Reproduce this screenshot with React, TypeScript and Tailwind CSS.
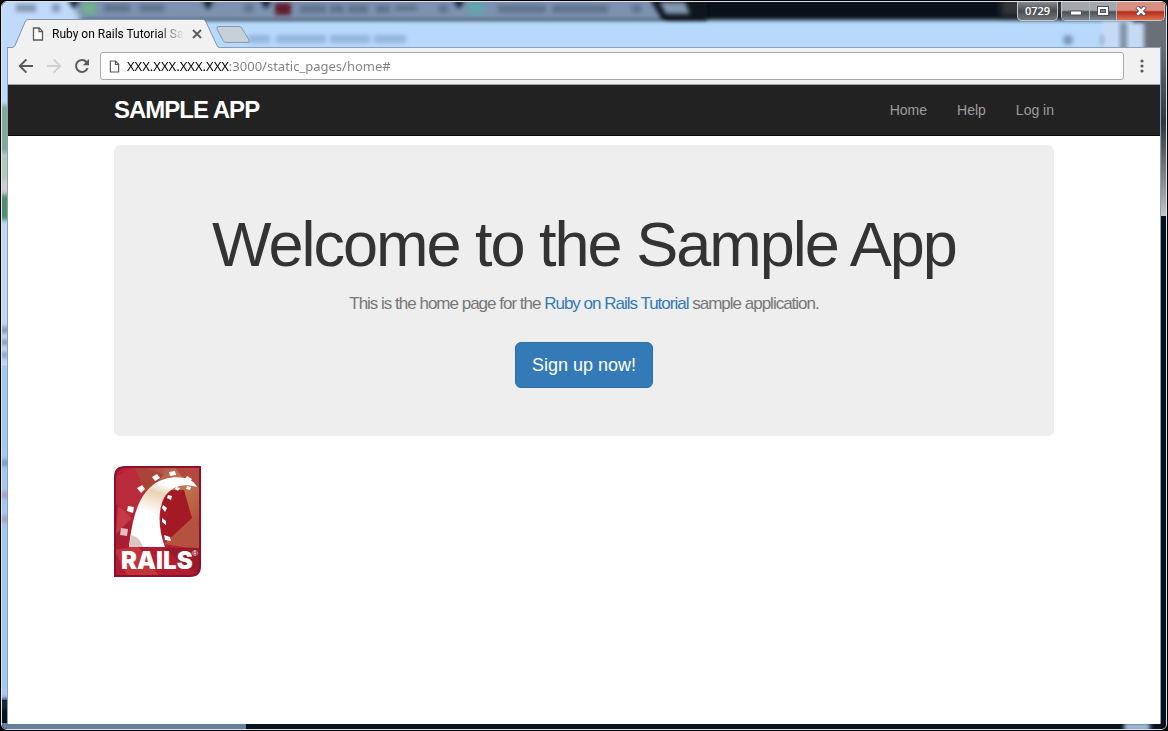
import React from "react";

type IconProps = {
  className?: string;
};

const PageIcon = ({ className }: IconProps) => (
  <svg
    viewBox="0 0 12 14"
    className={className}
    fill="none"
    stroke="#5a5a5a"
    strokeWidth="1.3"
  >
    <path d="M1.5 1h5.7l3.3 3.4V13h-9z" fill="#fcfcfc" />
    <path d="M7 1v3.6h3.5" />
  </svg>
);

const BackIcon = ({ className }: IconProps) => (
  <svg
    viewBox="0 0 16 16"
    className={className}
    fill="none"
    stroke="currentColor"
    strokeWidth="2"
  >
    <path d="M15 8H2M8.4 1.4L1.8 8l6.6 6.6" />
  </svg>
);

const ReloadIcon = () => (
  <svg viewBox="0 0 16 16" className="size-4" fill="none">
    <path
      d="M13.6 10.2A6 6 0 1 1 12.4 3.8L14 5.4"
      stroke="#5a5a5a"
      strokeWidth="2"
    />
    <path d="M15 1v6.2H8.8z" fill="#5a5a5a" />
  </svg>
);

// Blurred windows that shine through the glass frame
const Backdrop = () => (
  <svg className="absolute inset-0 size-full" aria-hidden="true">
    <defs>
      <filter id="soft" x="-20%" y="-50%" width="140%" height="200%">
        <feGaussianBlur stdDeviation="3" />
      </filter>
      <filter id="edge" x="-30%" y="-60%" width="160%" height="220%">
        <feGaussianBlur stdDeviation="2" />
      </filter>
      <linearGradient id="rightGlass" x1="0" y1="0" x2="0" y2="1">
        <stop offset="0" stopColor="#6a6e72" />
        <stop offset="0.45" stopColor="#33373b" />
        <stop offset="0.8" stopColor="#8b8b8b" />
        <stop offset="1" stopColor="#c4c4c4" />
      </linearGradient>
    </defs>
    <rect width="100%" height="100%" fill="#09121a" />
    <rect x="-10" y="18" width="98%" height="40" fill="#b7d9fc" filter="url(#edge)" />
    <rect x="-10" y="-10" width="670" height="28" fill="#7b92b0" filter="url(#edge)" />
    <path d="M-10 -10H66L80 22V60H-10z" fill="#c0dafa" filter="url(#soft)" />
    <path d="M645 -8h60v26H668q-9 0-13-9z" fill="#09121a" filter="url(#edge)" />
    <path d="M657 0h26l5 12h-24z" fill="#8196b1" filter="url(#edge)" />
    <rect x="273" y="1" width="16" height="12" fill="#5f1d2b" filter="url(#edge)" />
    <rect x="466" y="1" width="16" height="11" fill="#5fa5ac" filter="url(#edge)" />
    <rect x="80" y="0" width="14" height="12" fill="#72af8c" filter="url(#edge)" />
    <path
      d="M200 -2h12l-6 10zM258 -2h12l-6 9zM451 -2h12l-6 9zM66 -2h12l-6 9z"
      fill="#17202c"
      filter="url(#edge)"
    />
    <g fill="#47586f" opacity="0.5" filter="url(#edge)">
      <rect x="14" y="2" width="20" height="8" />
      <rect x="50" y="2" width="8" height="8" />
      <rect x="102" y="2" width="26" height="8" />
      <rect x="138" y="2" width="24" height="8" />
      <rect x="242" y="2" width="9" height="8" />
      <rect x="298" y="3" width="26" height="8" />
      <rect x="328" y="3" width="14" height="8" />
      <rect x="346" y="3" width="20" height="8" />
      <rect x="374" y="3" width="14" height="8" />
      <rect x="393" y="3" width="22" height="6" />
      <rect x="437" y="3" width="9" height="8" />
      <rect x="496" y="3" width="48" height="8" />
      <rect x="550" y="3" width="56" height="8" />
      <rect x="630" y="3" width="9" height="8" />
    </g>
    <g fill="#7b9fc7" opacity="0.6" filter="url(#edge)">
      <rect x="246" y="33" width="22" height="8" />
      <rect x="274" y="33" width="50" height="8" />
      <rect x="328" y="33" width="40" height="8" />
      <rect x="372" y="33" width="32" height="8" />
    </g>

    <rect x="-4" y="45" width="14" height="50%" fill="#bcd9f8" />
    <rect x="-4" y="50%" width="14" height="46%" fill="#a6c9f0" />
    <g filter="url(#edge)">
      <rect x="-4" y="103" width="12" height="48" fill="#82aa94" />
      <rect x="-4" y="153" width="12" height="32" fill="#b0cbb6" />
      <rect x="-4" y="178" width="12" height="14" fill="#d2cbd3" />
      <rect x="-4" y="192" width="12" height="26" fill="#4f8e68" />
      <rect x="-4" y="325" width="12" height="6" fill="#7b96b8" />
      <rect x="-4" y="338" width="12" height="5" fill="#7b96b8" />
      <rect x="-4" y="350" width="12" height="6" fill="#88a6cb" />
      <rect x="-4" y="458" width="12" height="6" fill="#7b96b8" />
      <rect x="-4" y="490" width="12" height="6" fill="#a899bd" />
      <rect x="-4" y="514" width="12" height="6" fill="#a899bd" />
    </g>

    <svg x="100%" overflow="visible">
      <rect x="-165" y="-10" width="180" height="24" fill="#30353b" filter="url(#soft)" />
      <rect x="-64" y="20" width="64" height="40" fill="#c5dbf5" filter="url(#edge)" />
      <rect x="-46" y="20" width="7" height="40" fill="#7f8fa3" filter="url(#edge)" />
      <rect x="-22" y="14" width="40" height="50" fill="#6b7075" filter="url(#edge)" />
      <circle cx="-98" cy="38" r="5" fill="#7895b7" filter="url(#edge)" />
      <rect x="-66" y="33" width="4" height="10" fill="#9bb3d0" filter="url(#edge)" />
      <rect x="-6" y="45" width="6" height="169" fill="url(#rightGlass)" />
    </svg>

    <svg y="100%" overflow="visible">
      <rect x="-4" y="-30" width="12" height="10" fill="#1c2a38" filter="url(#edge)" />
      <rect x="0" y="-6" width="244" height="6" fill="#65809c" />
    </svg>
    <svg x="100%" y="100%" overflow="visible">
      <rect x="-42" y="-6" width="26" height="8" fill="#a5c4e6" filter="url(#edge)" />
    </svg>
  </svg>
);

const WindowControls = () => (
  <div className="flex h-[19px] gap-[3px] pr-px">
    <button className="w-[41px] rounded-b-[5px] border border-t-0 border-[#c3c7cb] bg-linear-to-b from-[#85898d] via-[#4a4d51] to-[#73787d] text-center font-['Open_Sans',sans-serif] text-[11px] leading-4 font-semibold text-white">
      0729
    </button>
    <div className="flex w-[104px] overflow-hidden rounded-b-[5px] border border-t-0 border-[#c3c7cb]">
      <button
        aria-label="Minimize"
        className="flex w-7 items-center justify-center border-r border-[#b3b8bd] bg-linear-to-b from-[#a3a8ac] from-45% via-[#4b5056] via-55% to-[#7e8993]"
      >
        <svg viewBox="0 0 12 6" className="mt-1 h-[6px] w-3">
          <rect x="0.5" y="1" width="11" height="4" fill="#fff" stroke="#4c525c" />
        </svg>
      </button>
      <button
        aria-label="Maximize"
        className="flex w-[27px] items-center justify-center border-r border-[#b3b8bd] bg-linear-to-b from-[#a3a8ac] from-45% via-[#4b5056] via-55% to-[#7e8993]"
      >
        <svg viewBox="0 0 12 10" className="h-[10px] w-3" fill="none">
          <rect x="0.5" y="0.5" width="11" height="9" fill="#fff" stroke="#4c525c" />
          <rect x="3.5" y="3.5" width="5" height="3" fill="#7d838b" stroke="#4c525c" />
        </svg>
      </button>
      <button
        aria-label="Close window"
        className="flex flex-1 items-center justify-center bg-linear-to-b from-[#d98f80] from-45% via-[#b5271a] via-55% to-[#dd7050]"
      >
        <svg viewBox="0 0 12 10" className="h-[10px] w-3">
          <path d="M2 1l8 8M10 1L2 9" stroke="#5b4550" strokeWidth="4.4" />
          <path d="M2.3 1.3l7.4 7.4M9.7 1.3L2.3 8.7" stroke="#fff" strokeWidth="2.6" />
        </svg>
      </button>
    </div>
  </div>
);

const TitleBar = () => (
  <div className="relative z-10 flex h-[45px] justify-between">
    <div className="flex items-end">
      <div className="relative -mb-px h-[29px] w-[212px]">
        <svg viewBox="0 0 212 29" className="absolute inset-0 size-full">
          <path
            d="M0 28.5H5Q7 28.5 8 26.5L18 3Q19 .5 21 .5H196Q198 .5 199 3L210 26.5Q211 28.5 212 28.5V29H0z"
            fill="#f1f1f1"
          />
          <path
            d="M0 28.5H5Q7 28.5 8 26.5L18 3Q19 .5 21 .5H196Q198 .5 199 3L210 26.5Q211 28.5 212 28.5"
            fill="none"
            stroke="#7f93ac"
          />
        </svg>
        <div className="relative flex h-full items-center pl-[25px]">
          <PageIcon className="h-[14px] w-3" />
          <span className="ml-2 w-[132px] bg-linear-to-r from-black from-80% to-transparent bg-clip-text font-[Roboto,sans-serif] text-[12px] leading-4 whitespace-nowrap text-transparent">
            Ruby on Rails Tutorial Sa
          </span>
          <button aria-label="Close tab" className="ml-2">
            <svg
              viewBox="0 0 10 10"
              className="size-[10px]"
              stroke="#5a5a5a"
              strokeWidth="1.8"
            >
              <path d="M1 1l8 8M9 1L1 9" />
            </svg>
          </button>
        </div>
      </div>
      <button aria-label="New tab" className="mb-1 -ml-1">
        <svg viewBox="0 0 36 17" className="h-[17px] w-9">
          <path
            d="M4 .5H24Q26 .5 27 2.5L34 14Q35 16.5 33 16.5H11Q9 16.5 8 14.5L2 3Q1 .5 4 .5z"
            fill="#c7d0d9"
            stroke="#8799ad"
          />
        </svg>
      </button>
    </div>
    <WindowControls />
  </div>
);

const Toolbar = () => (
  <div className="flex h-[37px] items-center border-b border-[#a3a3a3] bg-[#f1f1f1] pl-1">
    <button aria-label="Back" className="flex w-7 justify-center text-[#5a5a5a]">
      <BackIcon className="size-4" />
    </button>
    <button
      aria-label="Forward"
      disabled
      className="flex w-7 justify-center text-[#d0d0d0]"
    >
      <BackIcon className="size-4 rotate-180" />
    </button>
    <button aria-label="Reload" className="flex w-7 justify-center">
      <ReloadIcon />
    </button>
    <label className="ml-1 flex h-7 flex-1 items-center rounded-[3px] border border-[#a9a9a9] bg-white pl-2">
      <PageIcon className="h-[13px] w-[11px]" />
      <input
        type="text"
        aria-label="Address"
        defaultValue="XXX.XXX.XXX.XXX:3000/static_pages/home#"
        className="ml-[7px] flex-1 bg-linear-to-r from-black from-[102px] to-[#808080] to-[102px] bg-clip-text font-['Noto_Sans',sans-serif] text-[13px] leading-5 text-transparent outline-none"
      />
    </label>
    <button aria-label="Menu" className="flex w-9 justify-center">
      <svg viewBox="0 0 4 14" className="h-[14px] w-1" fill="#5a5a5a">
        <circle cx="2" cy="2" r="1.6" />
        <circle cx="2" cy="7" r="1.6" />
        <circle cx="2" cy="12" r="1.6" />
      </svg>
    </button>
  </div>
);

const Header = () => (
  <header className="h-[51px] border-b border-[#080808] bg-[#222]">
    <div className="mx-auto flex h-full max-w-[940px] items-center justify-between">
      <a
        href="#"
        className="text-[24px] leading-8 font-bold tracking-[-1px] text-white uppercase"
      >
        sample app
      </a>
      <nav className="flex gap-[30px] text-sm text-[#9d9d9d]">
        <a href="#">Home</a>
        <a href="#">Help</a>
        <a href="#">Log in</a>
      </nav>
    </div>
  </header>
);

const Hero = () => (
  <div className="rounded-md bg-[#eee] px-[60px] pt-[63px] pb-12 text-center">
    <h1 className="text-[63px] leading-[72px] tracking-[-2px] text-[#333]">
      Welcome to the Sample App
    </h1>
    <h2 className="mt-[14px] text-[17px] leading-5 tracking-[-1px] text-[#777]">
      This is the home page for the{" "}
      <a href="#" className="text-[#337ab7]">
        Ruby on Rails Tutorial
      </a>{" "}
      sample application.
    </h2>
    <a
      href="#"
      className="mt-7 inline-block rounded-md border border-[#2e6da4] bg-[#337ab7] px-4 py-[10px] text-[18px] leading-6 text-white"
    >
      Sign up now!
    </a>
  </div>
);

const RailsLogo = () => (
  <svg viewBox="0 0 87 111" className="h-[111px] w-[87px]" role="img" aria-label="Rails">
    <defs>
      <clipPath id="badge">
        <path d="M11 1H86V100Q86 110 76 110H1V11Q1 1 11 1z" />
      </clipPath>
      <linearGradient id="track" x1="0.6" y1="0" x2="0.3" y2="1">
        <stop offset="0" stopColor="#fff" />
        <stop offset="0.12" stopColor="#fff" />
        <stop offset="0.25" stopColor="#ead2b4" />
        <stop offset="0.55" stopColor="#fff" />
        <stop offset="1" stopColor="#fff" />
      </linearGradient>
      <linearGradient id="gold" x1="0" y1="0" x2="1" y2="1">
        <stop offset="0" stopColor="#a8323a" />
        <stop offset="0.45" stopColor="#c07a52" />
        <stop offset="0.75" stopColor="#b9573f" />
        <stop offset="1" stopColor="#a52f35" />
      </linearGradient>
    </defs>
    <g clipPath="url(#badge)">
      <rect width="87" height="111" fill="#b32035" />
      <path d="M20 0H87V85L62 74L40 26z" fill="url(#gold)" />
      <path d="M60 0H87V22L70 14z" fill="#b5493f" />
      <path d="M20 0L50 8L30 32z" fill="#a94437" />
      <path d="M0 12L20 0L34 32L14 52L0 34z" fill="#b92a3a" />
      <path d="M0 36L14 50L26 78L0 84z" fill="#a71d32" />
      <path d="M4 40L18 52L2 68z" fill="#c43b45" />
      <path d="M48 24L70 24L78 52L60 80L46 70z" fill="#a31a25" />
      <path d="M78 52L87 66V84L50 78z" fill="#b5523f" />
      <path d="M0 84L36 80L87 82V111H0z" fill="#b01c30" />
      <path d="M0 84L24 80L46 111H14z" fill="#c13439" />
      <path d="M50 82L87 82V111L66 96z" fill="#971a2b" />
    </g>
    <path
      d="M15 81C18 55 23 31 39 19C53 8 78 9 83 21C67 16 56 22 50 32C43 46 45 65 51 81z"
      fill="url(#track)"
    />
    <path d="M15 81L17 69Q25 70 29 81z" fill="#dfc4c4" />
    <g fill="#fff">
      <path d="M38 11l5-3 3 4-5 3zM55 6l6-1 1 4-6 1zM73 10l5 3-2 3-5-3z" />
      <path d="M23 22l5-3 3 4-4 4zM14 40l6 1-1 6-6-2z" />
      <path d="M7 62l7 1-1 7-7-1z" fill="#e5bcc0" />
      <path d="M54 29l4 1-1 4-4-2zM49 39l4 3-2 4-3-4zM48 52l4 3v4l-4-3zM50 69l6 2 1 4-6-1zM62 21l4 1-2 3-3-2zM73 20l4 1-1 3-4-1z" />
    </g>
    <text
      x="7"
      y="103"
      fill="#fff"
      fontFamily="Inter, sans-serif"
      fontWeight="900"
      fontSize="24"
    >
      RAILS
    </text>
    <text x="78" y="90" fill="#fff" fontFamily="Liberation Sans, sans-serif" fontSize="8">
      ®
    </text>
    <path
      d="M11 1H86V100Q86 110 76 110H1V11Q1 1 11 1z"
      fill="none"
      stroke="#8d102b"
      strokeWidth="2"
    />
  </svg>
);

const App = () => {
  return (
    <div className="flex min-h-screen flex-col bg-black p-px font-['Liberation_Sans',Arial,sans-serif]">
      <div className="relative flex flex-1 flex-col overflow-hidden rounded-md border border-[#dce5ef]">
        <Backdrop />
        <div className="relative flex flex-1 flex-col pb-[5px]">
          <div className="pl-[5px]">
            <TitleBar />
          </div>
          <div className="mx-[5px] flex flex-1 flex-col border border-b-0 border-[#8aa0b8] bg-white">
            <Toolbar />
            <Header />
            <main className="mx-auto w-full max-w-[940px] pt-[9px]">
              <Hero />
              <a href="#" className="mt-[30px] inline-block">
                <RailsLogo />
              </a>
            </main>
          </div>
        </div>
      </div>
    </div>
  );
};

export default App;
